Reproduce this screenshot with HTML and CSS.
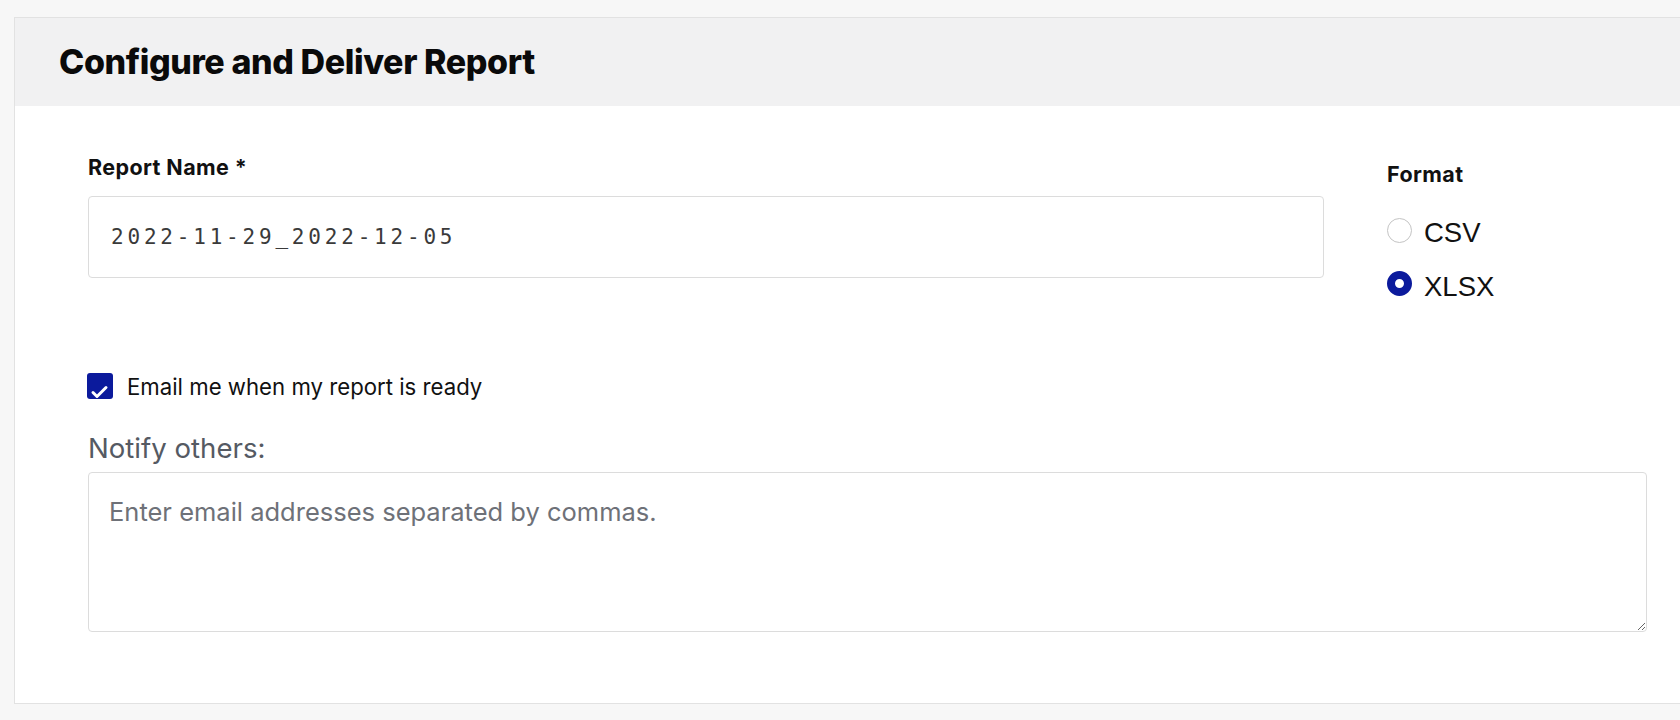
FILE: index.html
```html
<!DOCTYPE html>
<html>
<head>
<meta charset="utf-8">
<title>Configure and Deliver Report</title>
<link rel="stylesheet" href="styles.css">
</head>
<body>
<div class="card">
  <div class="card-header">
    <h1 class="title">Configure and Deliver Report</h1>
  </div>
  <div class="card-body">
    <div class="top-row">
      <div class="name-col">
        <label class="field-label" for="rname">Report Name *</label>
        <input id="rname" class="text-input" type="text" value="2022-11-29_2022-12-05">
      </div>
      <div class="format-col">
        <div class="field-label format-label">Format</div>
        <label class="radio-row"><span class="radio"></span><span class="radio-text">CSV</span></label>
        <label class="radio-row second"><span class="radio checked"></span><span class="radio-text">XLSX</span></label>
      </div>
    </div>
    <label class="check-row">
      <span class="checkbox"><svg class="check-icon" viewBox="0 0 26 26" width="26" height="26"><path d="M6 19.5 L10 23.5 L19 14.5" fill="none" stroke="#ffffff" stroke-width="3" stroke-linecap="round" stroke-linejoin="round"/></svg></span>
      <span class="check-text">Email me when my report is ready</span>
    </label>
    <div class="notify-label">Notify others:</div>
    <textarea class="textarea" placeholder="Enter email addresses separated by commas."></textarea>
  </div>
</div>
</body>
</html>
```

FILE: styles.css
```css
html, body {
  margin: 0;
  padding: 0;
  overflow: hidden;
}
body {
  background: #f7f7f7;
  font-family: Inter, "Liberation Sans", sans-serif;
  color: #111111;
}
.card {
  margin: 17px 0 0 14px;
  width: 1708px;
  background: #ffffff;
  border: 1px solid #e2e2e2;
}
.card-header {
  height: 88px;
  background: #f1f1f2;
  padding-left: 44px;
  display: flex;
  align-items: center;
}
.title {
  margin: 0;
  font-family: Inter, "Liberation Sans", sans-serif;
  font-weight: 800;
  font-size: 34px;
  line-height: 40px;
  letter-spacing: -0.4px;
  color: #0a0a0a;
}
.card-body {
  padding: 49px 74px 71px 73px;
}
.top-row {
  display: flex;
  align-items: flex-start;
  gap: 63px;
}
.name-col {
  width: 1236px;
  display: flex;
  flex-direction: column;
}
.field-label {
  font-family: Inter, "Liberation Sans", sans-serif;
  font-weight: 700;
  font-size: 21.5px;
  line-height: 24px;
  letter-spacing: 0.4px;
  color: #111111;
}
.text-input {
  margin-top: 17px;
  box-sizing: border-box;
  height: 82px;
  width: 100%;
  border: 1px solid #dcdcdc;
  border-radius: 4px;
  padding: 0 20px 0 22px;
  font-family: "DejaVu Sans Mono", monospace;
  font-size: 21px;
  letter-spacing: 3.8px;
  color: #3a3a3a;
  background: #ffffff;
  outline: none;
}
.format-col {
  padding-top: 7px;
  display: flex;
  flex-direction: column;
}
.format-label {
  margin-bottom: 23px;
}
.radio-row {
  display: flex;
  align-items: center;
  gap: 12px;
  height: 42px;
}
.radio-row.second {
  margin-top: 11.5px;
}
.radio {
  box-sizing: border-box;
  width: 25px;
  height: 25px;
  border-radius: 50%;
  border: 1px solid #c4c4c4;
  background: #ffffff;
}
.radio.checked {
  border: 8.5px solid #0b1a9c;
}
.radio-text {
  font-family: "Liberation Sans", Arial, sans-serif;
  font-size: 27.5px;
  line-height: 36px;
  padding-top: 6px;
  color: #111111;
}
.check-row {
  margin-top: 68px;
  display: flex;
  align-items: center;
  gap: 14px;
  height: 26px;
}
.checkbox {
  width: 26px;
  height: 26px;
  border-radius: 3px;
  background: #0b1a9c;
  display: block;
  margin-left: -1px;
  overflow: hidden;
}
.check-icon {
  display: block;
}
.check-text {
  font-size: 22.2px;
  line-height: 26px;
  padding-top: 3px;
  color: #111111;
}
.notify-label {
  margin-top: 33px;
  font-size: 27.6px;
  line-height: 32px;
  color: #555a63;
}
.textarea {
  display: block;
  margin-top: 8px;
  box-sizing: border-box;
  width: 1559px;
  height: 160px;
  border: 1px solid #dcdcdc;
  border-radius: 4px;
  padding: 23px 20px 20px;
  font-family: Inter, "Liberation Sans", sans-serif;
  font-size: 25.5px;
  line-height: 32px;
  color: #111111;
  background: #ffffff;
  resize: both;
  outline: none;
}
.textarea::placeholder {
  color: #6e7178;
}
```
